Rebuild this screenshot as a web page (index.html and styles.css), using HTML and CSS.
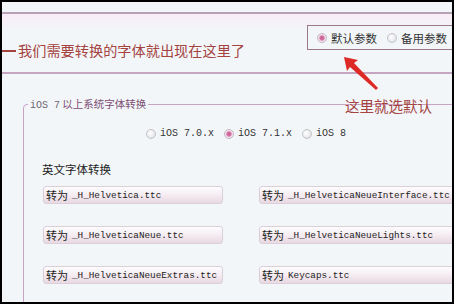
FILE: index.html
```html
<!DOCTYPE html>
<html lang="zh">
<head>
<meta charset="utf-8">
<link rel="stylesheet" href="styles.css">
</head>
<body>
<div class="frame">
  <div class="header">
    <div class="note"><span class="dash"></span>我们需要转换的字体就出现在这里了</div>
    <div class="mode">
      <label class="opt"><span class="radio on"></span><span class="cjk">默认参数</span></label>
      <label class="opt"><span class="radio"></span><span class="cjk">备用参数</span></label>
    </div>
  </div>

  <fieldset class="group">
    <legend class="legend"><span class="mono">iOS 7</span> 以上系统字体转换</legend>
    <div class="versions">
      <label class="opt"><span class="radio"></span><span class="mono">iOS 7.0.x</span></label>
      <label class="opt"><span class="radio on"></span><span class="mono">iOS 7.1.x</span></label>
      <label class="opt"><span class="radio"></span><span class="mono">iOS 8</span></label>
    </div>
    <div class="section">英文字体转换</div>
    <div class="buttons">
      <div class="btn"><span class="cjk">转为</span> <span class="mono">_H_Helvetica.ttc</span></div>
      <div class="btn"><span class="cjk">转为</span> <span class="mono">_H_HelveticaNeueInterface.ttc</span></div>
      <div class="btn"><span class="cjk">转为</span> <span class="mono">_H_HelveticaNeue.ttc</span></div>
      <div class="btn"><span class="cjk">转为</span> <span class="mono">_H_HelveticaNeueLights.ttc</span></div>
      <div class="btn"><span class="cjk">转为</span> <span class="mono">_H_HelveticaNeueExtras.ttc</span></div>
      <div class="btn"><span class="cjk">转为</span> <span class="mono">Keycaps.ttc</span></div>
    </div>
  </fieldset>

  <div class="callout">这里就选默认</div>
  <svg class="arrow" width="40" height="40" viewBox="0 0 40 40">
    <polygon points="0,0 14,3 10,6 34,31 32,33 6,10 3,14" fill="#dd2a26"/>
  </svg>
</div>
</body>
</html>
```
FILE: styles.css
```css
html, body {
  margin: 0;
  padding: 0;
}
body {
  background: #000;
  width: 454px;
  height: 304px;
  overflow: hidden;
  font-family: "Noto Sans CJK SC", "Noto Sans", sans-serif;
}
.frame {
  position: relative;
  margin: 2px 2px 0 2px;
  width: 450px;
  height: 300px;
  background: #f3f6f9;
  overflow: hidden;
}
.header {
  margin-top: 10px;
  height: 58px;
  border-top: 2px solid #b6a2b4;
  border-bottom: 2px solid #c4a6c0;
  background: linear-gradient(#f9ecf6 0, #f5f2f7 10px, #f3f6f9 14px);
  display: flex;
  justify-content: space-between;
  align-items: flex-start;
}
.note {
  margin-top: 28px;
  display: flex;
  align-items: center;
  font-size: 14.2px;
  line-height: 17px;
  color: #a4433f;
}
.dash {
  display: inline-block;
  width: 14px;
  height: 2px;
  background: #a4433f;
  margin-right: 2px;
}
.mode {
  margin-top: 11px;
  width: 160px;
  margin-right: -15px;
  height: 25px;
  border: 1px solid #9c7a84;
  display: flex;
  align-items: center;
  padding-left: 9px;
  gap: 10px;
  box-sizing: border-box;
  font-size: 11.5px;
  color: #333;
}
.opt {
  display: flex;
  align-items: center;
  gap: 4px;
}
.radio {
  width: 10px;
  height: 10px;
  border-radius: 50%;
  box-sizing: border-box;
  border: 1px solid #c3c3c8;
  background: radial-gradient(circle at 40% 40%, #ffffff 0, #e6e6ea 70%, #d8d8de 100%);
  display: inline-block;
  flex: none;
}
.radio.on {
  background: radial-gradient(circle, #c4578f 0, #d77aa8 2.2px, #f3e4ee 3.2px, #e8e2ea 100%);
  border-color: #c5b7c4;
}
.cjk {
  font-family: "Noto Sans CJK SC", sans-serif;
}
.mono {
  font-family: "Liberation Mono", "DejaVu Sans Mono", monospace;
}
.group {
  margin: 23px 0 0 21px;
  padding: 0;
  width: 500px;
  height: 260px;
  border: 1px solid #c9a3c4;
  border-radius: 4px 0 0 0;
  box-sizing: border-box;
}
.legend {
  margin-left: 4px;
  padding: 0 2px;
  font-size: 10.5px;
  line-height: 13px;
  color: #7d4f73;
}
.legend .mono {
  font-size: 10px;
  color: #6c6470;
}
.versions {
  margin-top: 15px;
  padding-left: 122px;
  display: flex;
  gap: 10px;
  font-size: 10px;
  line-height: 14px;
  color: #333;
}
.section {
  margin-top: 21px;
  padding-left: 18px;
  font-size: 11.5px;
  line-height: 14px;
  color: #222;
}
.buttons {
  margin-top: 10px;
  padding-left: 19px;
  display: grid;
  grid-template-columns: 180px 210px;
  column-gap: 36px;
  row-gap: 22px;
}
.btn {
  height: 18px;
  box-sizing: border-box;
  border: 1px solid #dcd0d8;
  border-radius: 3px;
  background: linear-gradient(#fefcfd 0, #f6eef3 45%, #e8d8e2 100%);
  display: flex;
  align-items: center;
  gap: 4px;
  padding-left: 2px;
  font-size: 11px;
  color: #222;
  white-space: nowrap;
}
.btn .mono {
  font-size: 9.3px;
}
.callout {
  position: absolute;
  left: 343px;
  top: 95px;
  font-size: 14.5px;
  line-height: 17px;
  color: #a4433f;
}
.arrow {
  position: absolute;
  left: 342px;
  top: 55px;
}
```
